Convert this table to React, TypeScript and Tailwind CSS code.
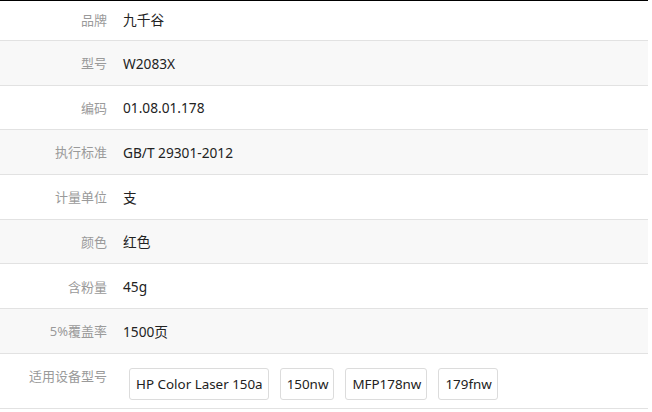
const rows = [
  { label: "品牌", value: "九千谷" },
  { label: "型号", value: "W2083X" },
  { label: "编码", value: "01.08.01.178" },
  { label: "执行标准", value: "GB/T 29301-2012" },
  { label: "计量单位", value: "支" },
  { label: "颜色", value: "红色" },
  { label: "含粉量", value: "45g" },
  { label: "5%覆盖率", value: "1500页" },
]

const models = ["HP Color Laser 150a", "150nw", "MFP178nw", "179fnw"]

export default function App() {
  return (
    <div
      className="w-[652px] h-[412px] overflow-hidden bg-white text-[13px]"
      style={{ fontFamily: '"Noto Sans", "Noto Sans CJK SC", sans-serif' }}
    >
      <div className="w-[648px] border-t border-black">
        {rows.map((row, i) => (
          <div
            key={row.label}
            className={
              "flex items-center border-b border-[#e2e2e2] " +
              (i === 0 ? "h-[40px] " : "h-[44.7px] pt-[2px] ") +
              (i % 2 === 1 ? "bg-[#f8f8f8]" : "bg-white")
            }
          >
            <div className="w-[107px] text-right text-[#9a9a9a]">{row.label}</div>
            <div className="ml-[16px] text-[13.7px] text-[#222]">{row.value}</div>
          </div>
        ))}
        <div className="flex h-[55px] border-b border-[#e2e2e2] bg-white">
          <div className="w-[107px] pt-[13px] text-right text-[#9a9a9a]">适用设备型号</div>
          <div className="ml-[22px] flex gap-[11px] pt-[14px]">
            {models.map((m) => (
              <span
                key={m}
                className="flex h-[32px] items-center rounded-[3px] border border-[#dcdcdc] pl-[6px] pr-[5px] text-[13.4px] text-[#222]"
              >
                {m}
              </span>
            ))}
          </div>
        </div>
      </div>
    </div>
  )
}
